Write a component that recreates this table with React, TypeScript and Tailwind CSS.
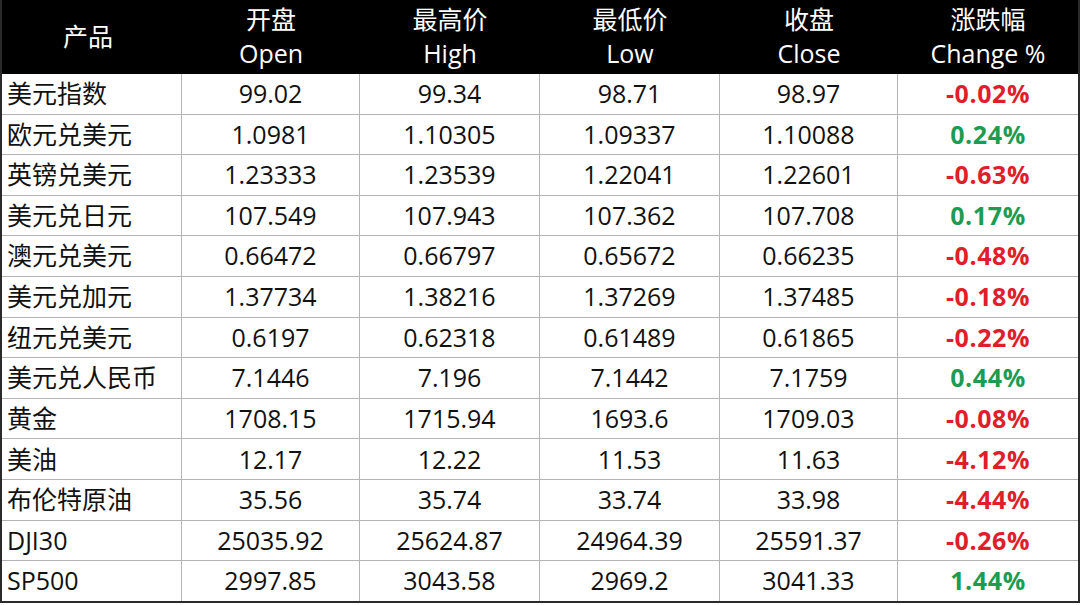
const rows: [string, string, string, string, string, string][] = [
  ['美元指数', '99.02', '99.34', '98.71', '98.97', '-0.02%'],
  ['欧元兑美元', '1.0981', '1.10305', '1.09337', '1.10088', '0.24%'],
  ['英镑兑美元', '1.23333', '1.23539', '1.22041', '1.22601', '-0.63%'],
  ['美元兑日元', '107.549', '107.943', '107.362', '107.708', '0.17%'],
  ['澳元兑美元', '0.66472', '0.66797', '0.65672', '0.66235', '-0.48%'],
  ['美元兑加元', '1.37734', '1.38216', '1.37269', '1.37485', '-0.18%'],
  ['纽元兑美元', '0.6197', '0.62318', '0.61489', '0.61865', '-0.22%'],
  ['美元兑人民币', '7.1446', '7.196', '7.1442', '7.1759', '0.44%'],
  ['黄金', '1708.15', '1715.94', '1693.6', '1709.03', '-0.08%'],
  ['美油', '12.17', '12.22', '11.53', '11.63', '-4.12%'],
  ['布伦特原油', '35.56', '35.74', '33.74', '33.98', '-4.44%'],
  ['DJI30', '25035.92', '25624.87', '24964.39', '25591.37', '-0.26%'],
  ['SP500', '2997.85', '3043.58', '2969.2', '3041.33', '1.44%'],
];

const headers: [string, string][] = [
  ['开盘', 'Open'],
  ['最高价', 'High'],
  ['最低价', 'Low'],
  ['收盘', 'Close'],
  ['涨跌幅', 'Change %'],
];

const cols = 'grid grid-cols-[180px_178px_180px_180px_178px_1fr]';

export default function App() {
  return (
    <div
      className="w-[1080px] h-[605px] bg-white text-[25px] text-[#111]"
      style={{fontFamily: '"Open Sans", "Noto Sans CJK SC", sans-serif'}}
    >
      <div className="h-[603px] border-x-2 border-b-2 border-[#2a2a2a] flex flex-col">
        {/* header */}
        <div className={`${cols} h-[74px] bg-black text-white`}>
          <div className="flex items-center justify-center pr-2">产品</div>
          {headers.map(([zh, en]) => (
            <div key={en} className="flex flex-col items-center justify-center leading-[34px] pb-[2px]">
              <span>{zh}</span>
              <span>{en}</span>
            </div>
          ))}
        </div>

        {/* body */}
        {rows.map(([name, open, high, low, close, change]) => {
          const up = !change.startsWith('-');
          return (
            <div key={name} className={`${cols} flex-1 border-b border-[#b4b4b4] last:border-b-0`}>
              <div className="flex items-center pl-[5px] border-r border-[#b4b4b4]">{name}</div>
              {[open, high, low, close].map((v, i) => (
                <div key={i} className="flex items-center justify-center border-r border-[#b4b4b4]">
                  {v}
                </div>
              ))}
              <div
                className={`flex items-center justify-center font-bold tracking-[0.6px] ${up ? 'text-[#1c9c52]' : 'text-[#e01e2b]'}`}
              >
                {change}
              </div>
            </div>
          );
        })}
      </div>
    </div>
  );
}
